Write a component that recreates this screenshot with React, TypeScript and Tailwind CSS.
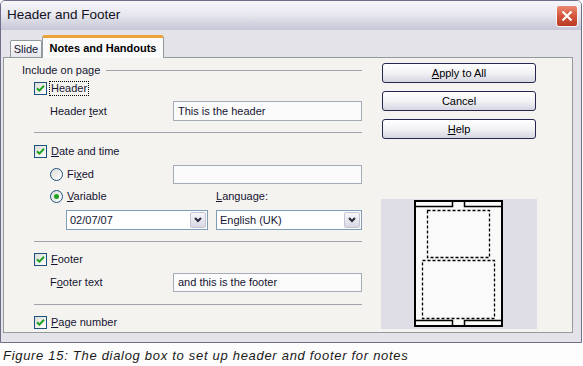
import React from 'react';

const font = { fontFamily: '"Liberation Sans", Arial, sans-serif' };

function Check() {
  return (
    <span className="w-[13px] h-[13px] border border-[#1c5180] bg-linear-to-br from-[#dcdcd7] to-white flex items-center justify-center shrink-0">
      <svg width="9" height="9" viewBox="0 0 9 9">
        <path d="M1 4.2 L3.4 6.6 L8 1.8" stroke="#21a121" strokeWidth="2" fill="none" />
      </svg>
    </span>
  );
}

function Radio({ on }: { on?: boolean }) {
  return (
    <span className="w-[13px] h-[13px] rounded-full border border-[#1c5180] bg-linear-to-br from-[#dcdcd7] to-white flex items-center justify-center shrink-0">
      {on && <span className="w-[5px] h-[5px] rounded-full bg-[#21a121]" />}
    </span>
  );
}

function U({ children }: { children: React.ReactNode }) {
  return <span className="underline underline-offset-[1px]">{children}</span>;
}

function Sep({ className = '' }: { className?: string }) {
  return <div className={`h-px bg-[#a3a3ab] ${className}`} />;
}

function TextBox({ value, className = '' }: { value?: string; className?: string }) {
  return (
    <div className={`border border-[#a5acb8] bg-[#fbfbfb] flex items-center px-[4px] ${className}`}>
      {value}
    </div>
  );
}

function Select({ value, className = '' }: { value: string; className?: string }) {
  return (
    <div className={`h-[20px] border border-[#7f9db9] bg-white flex items-center pl-[3px] pr-[1px] ${className}`}>
      <span className="flex-1">{value}</span>
      <span className="w-[16px] h-[16px] rounded-[2px] border border-[#c4c4d4] bg-linear-to-b from-[#f6f6fa] to-[#d8d8e4] flex items-center justify-center">
        <svg width="8" height="6" viewBox="0 0 8 6">
          <path d="M1 1 L4 4 L7 1" stroke="#2a2a40" strokeWidth="2" fill="none" />
        </svg>
      </span>
    </div>
  );
}

function Button({ children }: { children: React.ReactNode }) {
  return (
    <button className="w-[154px] h-[20px] ml-[1px] rounded-[3px] border border-[#262650] bg-linear-to-b from-white via-[#f2f2f6] to-[#d6d6e2] text-[11px] text-black flex items-center justify-center">
      {children}
    </button>
  );
}

function Preview() {
  return (
    <svg width="156" height="130" viewBox="0 0 156 130" className="block bg-[#dfdee6]">
      <rect x="34" y="2" width="87" height="125" fill="#fafafa" stroke="#000" strokeWidth="2" />
      <path d="M34 7.5 H71.5 V2 M83.5 2 V7.5 H121" stroke="#000" strokeWidth="1.5" fill="none" />
      <path d="M34 121.5 H71.5 V127 M83.5 127 V121.5 H121" stroke="#000" strokeWidth="1.5" fill="none" />
      <rect x="46.5" y="11.5" width="62" height="47" fill="none" stroke="#000" strokeWidth="1.3" strokeDasharray="3 2" />
      <rect x="41.5" y="61.5" width="72" height="58" fill="none" stroke="#000" strokeWidth="1.3" strokeDasharray="3 2" />
    </svg>
  );
}

export default function App() {
  return (
    <div className="w-[583px] h-[366px] bg-[#fdfdfd] flex flex-col overflow-hidden" style={font}>
      {/* Dialog window */}
      <div className="w-[582px] h-[343px] border border-[#6e6e8a] rounded-t-[5px] bg-[#e4e3ea] flex flex-col">
        {/* Title bar */}
        <div className="h-[29px] flex items-center justify-between pl-[6px] pr-[3px] bg-linear-to-b from-[#f7f7fa] via-[#e6e6ee] to-[#c6c6d6] rounded-t-[4px]">
          <span className="text-[13.5px] text-[#111122]">Header and Footer</span>
          <span className="w-[22px] h-[22px] rounded-[3px] border border-[#f4f4f8] bg-linear-to-b from-[#e98a72] via-[#d4553b] to-[#b83a24] flex items-center justify-center">
            <svg width="12" height="12" viewBox="0 0 12 12">
              <path d="M1.5 1.5 L10.5 10.5 M10.5 1.5 L1.5 10.5" stroke="#fff" strokeWidth="2.2" />
            </svg>
          </span>
        </div>

        {/* Body */}
        <div className="flex-1 flex flex-col pl-[2px] pr-[8px] pt-[5px] pb-[9px] text-[11px] text-[#141432]">
          {/* Tabs */}
          <div className="h-[22px] flex items-end pl-[7px]">
            <div className="h-[17px] w-[32px] border border-b-0 border-[#919b9c] rounded-t-[2px] bg-linear-to-b from-white to-[#e6e6ec] flex items-center justify-center">
              Slide
            </div>
            <div className="h-[23px] w-[122px] -mb-px relative z-10 border-x border-[#919b9c] border-t-[3px] border-t-[#eba236] rounded-t-[3px] bg-[#fbfbfc] flex items-center justify-center font-bold text-black">
              Notes and Handouts
            </div>
          </div>

          {/* Tab page */}
          <div className="flex-1 border border-[#919b9c] bg-[#f4f3ef] flex">
            {/* Left column */}
            <div className="ml-[18px] w-[340px] pt-[5px] flex flex-col">
              <div className="h-[14px] flex items-center">
                <span>Include on page</span>
                <Sep className="flex-1 ml-[6px]" />
              </div>

              <div className="h-[14px] mt-[4px] flex items-center pl-[12px] gap-[3px]">
                <Check />
                <span className="outline outline-1 outline-dotted outline-black px-[1px] leading-[13px]">Header</span>
              </div>

              <div className="h-[20px] mt-[6px] flex items-center pl-[28px]">
                <span className="w-[123px]">
                  Header <U>t</U>ext
                </span>
                <TextBox value="This is the header" className="flex-1 h-[20px]" />
              </div>

              <Sep className="mt-[11px] ml-[12px]" />

              <div className="h-[14px] mt-[11px] flex items-center pl-[12px] gap-[4px]">
                <Check />
                <span>
                  <U>D</U>ate and time
                </span>
              </div>

              <div className="h-[19px] mt-[7px] flex items-center pl-[28px]">
                <span className="w-[123px] flex items-center gap-[4px]">
                  <Radio />
                  <span>
                    Fi<U>x</U>ed
                  </span>
                </span>
                <TextBox className="flex-1 h-[19px]" />
              </div>

              <div className="h-[14px] mt-[5px] flex items-center pl-[28px]">
                <span className="w-[166px] flex items-center gap-[4px]">
                  <Radio on />
                  <span>
                    <U>V</U>ariable
                  </span>
                </span>
                <span>
                  <U>L</U>anguage:
                </span>
              </div>

              <div className="mt-[7px] flex items-center pl-[44px] gap-[8px]">
                <Select value="02/07/07" className="w-[142px]" />
                <Select value="English (UK)" className="w-[146px]" />
              </div>

              <Sep className="mt-[11px] ml-[12px]" />

              <div className="h-[14px] mt-[10px] flex items-center pl-[12px] gap-[4px]">
                <Check />
                <span>
                  <U>F</U>ooter
                </span>
              </div>

              <div className="h-[19px] mt-[7px] flex items-center pl-[28px]">
                <span className="w-[123px]">
                  F<U>o</U>oter text
                </span>
                <TextBox value="and this is the footer" className="flex-1 h-[19px]" />
              </div>

              <Sep className="mt-[12px] ml-[12px]" />

              <div className="h-[14px] mt-[10px] flex items-center pl-[12px] gap-[4px]">
                <Check />
                <span>
                  <U>P</U>age number
                </span>
              </div>
            </div>

            {/* Right column */}
            <div className="ml-[19px] w-[156px] pt-[5px] flex flex-col">
              <div className="flex flex-col gap-[8px]">
                <Button>
                  <U>A</U>pply to All
                </Button>
                <Button>Cancel</Button>
                <Button>
                  <U>H</U>elp
                </Button>
              </div>
              <div className="mt-[60px]">
                <Preview />
              </div>
            </div>
          </div>
        </div>
      </div>

      {/* Caption */}
      <div className="pl-[3px] pt-[5px] text-[13px] italic tracking-[0.7px] text-[#1a1a1a] leading-[16px]">
        Figure 15: The dialog box to set up header and footer for notes
      </div>
    </div>
  );
}
